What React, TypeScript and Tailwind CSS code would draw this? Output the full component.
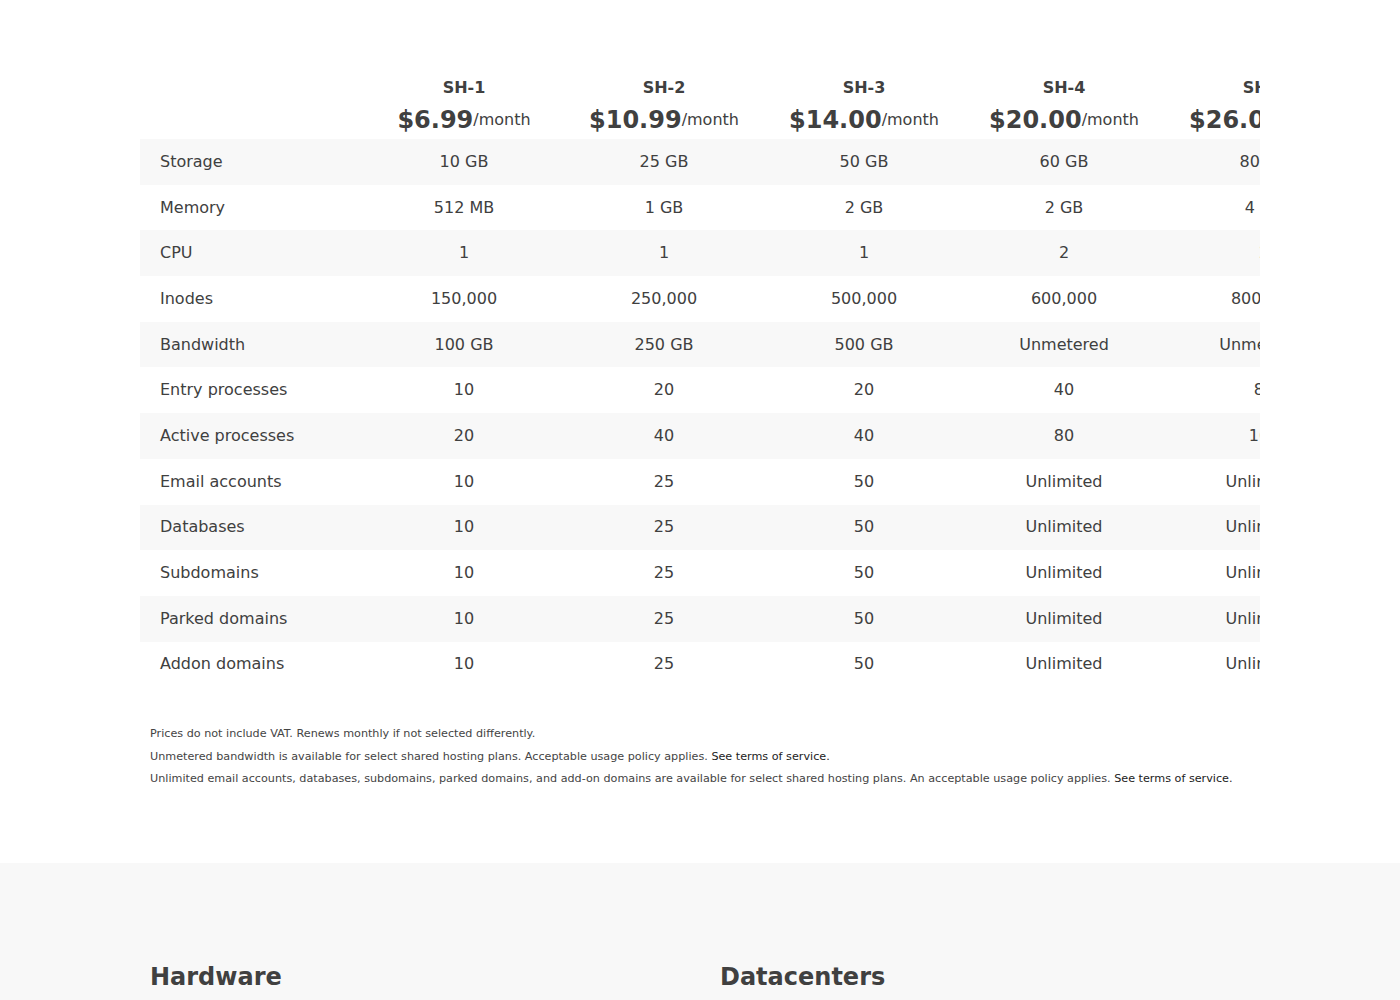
import React from 'react';

interface Plan {
  name: string;
  price: string;
  values: string[];
}

const FEATURES = [
  'Storage',
  'Memory',
  'CPU',
  'Inodes',
  'Bandwidth',
  'Entry processes',
  'Active processes',
  'Email accounts',
  'Databases',
  'Subdomains',
  'Parked domains',
  'Addon domains',
];

const PLANS: Plan[] = [
  { name: 'SH-1', price: '$6.99', values: ['10 GB', '512 MB', '1', '150,000', '100 GB', '10', '20', '10', '10', '10', '10', '10'] },
  { name: 'SH-2', price: '$10.99', values: ['25 GB', '1 GB', '1', '250,000', '250 GB', '20', '40', '25', '25', '25', '25', '25'] },
  { name: 'SH-3', price: '$14.00', values: ['50 GB', '2 GB', '1', '500,000', '500 GB', '20', '40', '50', '50', '50', '50', '50'] },
  { name: 'SH-4', price: '$20.00', values: ['60 GB', '2 GB', '2', '600,000', 'Unmetered', '40', '80', 'Unlimited', 'Unlimited', 'Unlimited', 'Unlimited', 'Unlimited'] },
  { name: 'SH-5', price: '$26.00', values: ['80 GB', '4 GB', '2', '800,000', 'Unmetered', '80', '160', 'Unlimited', 'Unlimited', 'Unlimited', 'Unlimited', 'Unlimited'] },
  { name: 'SH-6', price: '$36.00', values: ['120 GB', '6 GB', '4', '1,000,000', 'Unmetered', '120', '240', 'Unlimited', 'Unlimited', 'Unlimited', 'Unlimited', 'Unlimited'] },
];

export default function App() {
  return (
    <div className="min-h-screen bg-white text-[#404040]" style={{ fontFamily: '"DejaVu Sans", Verdana, sans-serif' }}>
      {/* Pricing table */}
      <section className="pt-[76px] pb-[72px]">
        <div className="mx-auto w-[1120px]">
          <div className="overflow-hidden">
            <table className="table-fixed border-collapse w-[1424px] text-base">
              <colgroup>
                <col className="w-[224px]" />
                {PLANS.map((p) => (
                  <col key={p.name} className="w-[200px]" />
                ))}
              </colgroup>
              <thead>
                <tr>
                  <th className="sticky left-0 bg-white p-0"></th>
                  {PLANS.map((p) => (
                    <th key={p.name} className="text-center font-normal p-0 pb-[3px] align-top">
                      <div className="font-bold leading-6">{p.name}</div>
                      <div className="mt-[4px] h-8 flex items-center justify-center whitespace-nowrap">
                        <span className="text-2xl font-bold">{p.price}</span>
                        <span>/month</span>
                      </div>
                    </th>
                  ))}
                </tr>
              </thead>
              <tbody>
                {FEATURES.map((f, i) => {
                  const bg = i % 2 === 0 ? 'bg-[#f8f8f8]' : 'bg-white';
                  return (
                    <tr key={f} className={bg}>
                      <td className={`sticky left-0 ${bg} pl-5 pr-0 py-[10.85px] leading-6 text-left whitespace-nowrap`}>{f}</td>
                      {PLANS.map((p) => (
                        <td key={p.name} className="px-0 py-[10.85px] leading-6 text-center whitespace-nowrap">
                          {p.values[i]}
                        </td>
                      ))}
                    </tr>
                  );
                })}
              </tbody>
            </table>
          </div>

          <div className="mt-[36px] px-[10px] text-[11.2px] leading-[22.5px] text-[#444]">
            <p>Prices do not include VAT. Renews monthly if not selected differently.</p>
            <p>
              Unmetered bandwidth is available for select shared hosting plans. Acceptable usage policy applies.{' '}
              <a href="#" className="text-[#222]">See terms of service.</a>
            </p>
            <p>
              Unlimited email accounts, databases, subdomains, parked domains, and add-on domains are available for select shared hosting plans. An acceptable usage policy applies.{' '}
              <a href="#" className="text-[#222]">See terms of service.</a>
            </p>
          </div>
        </div>
      </section>

      {/* Hardware / Datacenters */}
      <section className="bg-[#f8f8f8] pt-[98px] pb-16">
        <div className="mx-auto w-[1100px] grid grid-cols-2 gap-10">
          <div>
            <h2 className="text-2xl font-bold leading-8">Hardware</h2>
          </div>
          <div>
            <h2 className="text-2xl font-bold leading-8">Datacenters</h2>
          </div>
        </div>
      </section>
    </div>
  );
}
